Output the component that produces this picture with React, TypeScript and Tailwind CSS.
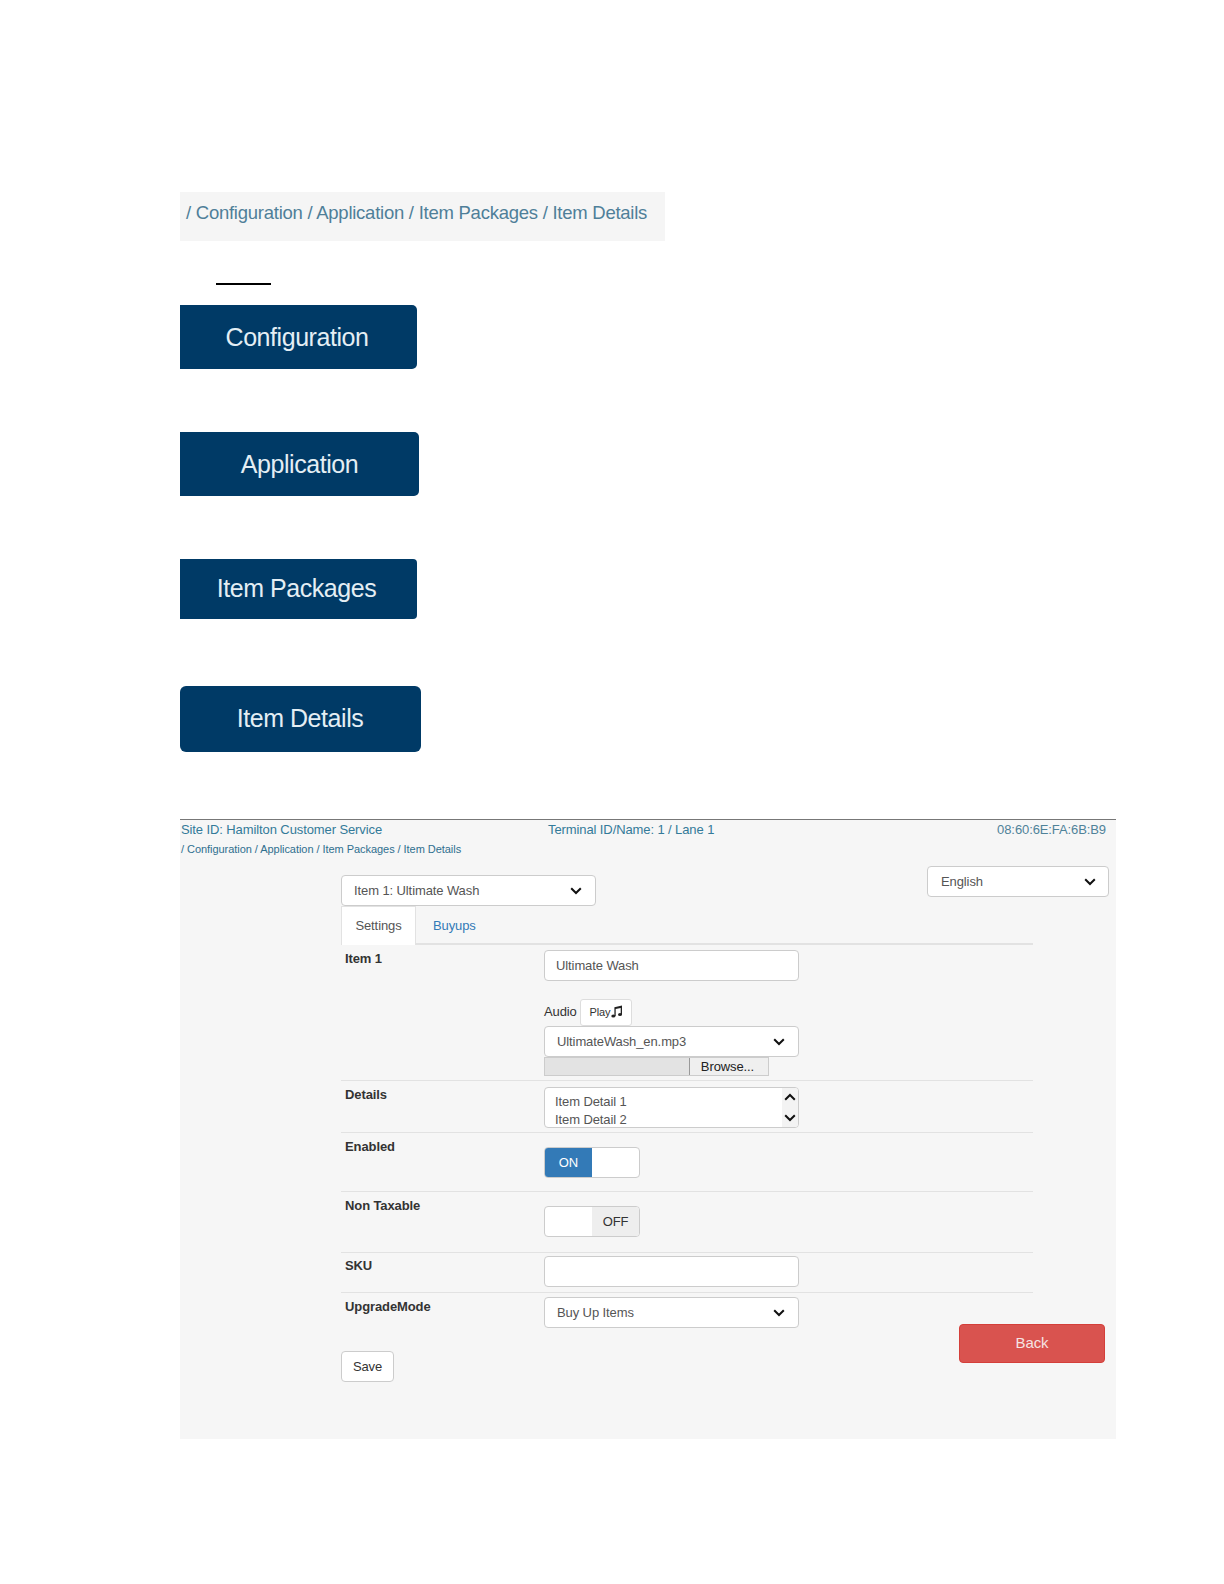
import React from "react";

const Chevron = ({ className = "" }: { className?: string }) => (
  <svg viewBox="0 0 12 8" className={`w-[12px] h-[8px] ${className}`} fill="none" stroke="#111" strokeWidth="2">
    <path d="M1.2 1.2 6 6 10.8 1.2" />
  </svg>
);

const Select = ({ label, className, pad = "pl-[12px] pr-[13px]" }: { label: string; className: string; pad?: string }) => (
  <div className={`flex items-center justify-between bg-white border border-[#ccc] rounded-[4px] text-[13px] text-[#555] ${pad} ${className}`}>
    <span>{label}</span>
    <Chevron />
  </div>
);

const NavButton = ({ label, className }: { label: string; className: string }) => (
  <div className={`flex items-center justify-center bg-[#003a66] text-[#e4eef4] text-[25px] tracking-[-0.45px] ${className}`}>
    {label}
  </div>
);

const Row = ({ label, className, labelClass = "pt-[6px]", children }: { label: string; className: string; labelClass?: string; children: React.ReactNode }) => (
  <div className={`flex border-b border-[#e2e2e2] ${className}`}>
    <div className={`w-[203px] pl-[4px] text-[13px] leading-[16px] font-bold text-[#333] ${labelClass}`}>{label}</div>
    <div className="flex-1">{children}</div>
  </div>
);

const MusicIcon = () => (
  <svg viewBox="0 0 12 13" className="w-[12px] h-[13px] -mt-[3px]" fill="#222">
    <path d="M3.4 2.2 11 .6v9.1h-1.3V3.1L4.7 4.1v7.1H3.4z" />
    <ellipse cx="2.3" cy="11" rx="2" ry="1.5" />
    <ellipse cx="9" cy="9.6" rx="2" ry="1.5" />
  </svg>
);

export default function App() {
  return (
    <div className="w-[1224px] h-[1584px] bg-white pt-[192px] pl-[180px] font-['Liberation_Sans',Arial,sans-serif]">
      <div className="w-[485px] h-[49px] bg-[#f5f5f5] pl-[6px] pt-[8px] text-[18.5px] leading-[26px] tracking-[-0.25px] text-[#4f7f99] whitespace-nowrap">
        / Configuration / Application / Item Packages / Item Details
      </div>
      <div className="ml-[36px] mt-[42px] w-[55px] h-[2px] bg-black" />

      <NavButton label="Configuration" className="mt-[20px] w-[237px] h-[64px] pt-[1px] pr-[3px] rounded-r-[5px]" />
      <NavButton label="Application" className="mt-[63px] w-[239px] h-[64px] pt-[1px] rounded-r-[5px]" />
      <NavButton label="Item Packages" className="mt-[63px] w-[237px] h-[60px] pr-[4px] rounded-r-[4px]" />
      <NavButton label="Item Details" className="mt-[67px] w-[241px] h-[66px] pr-[1px] rounded-[6px]" />

      <div className="mt-[67px] w-[936px] h-[620px] bg-[#f6f6f6] border-t border-[#777] tracking-[-0.1px]">
        <div className="flex justify-between h-[19px] pl-[1px] pr-[10px] pt-[1px] text-[13px] leading-[17px] text-[#337a99]">
          <span className="w-[367px]">Site ID: Hamilton Customer Service</span>
          <span className="flex-1">Terminal ID/Name: 1 / Lane 1</span>
          <span className="text-[#4f8299]">08:60:6E:FA:6B:B9</span>
        </div>
        <div className="h-[27px] pl-[1px] pt-[2px] text-[11px] leading-[16px] tracking-[-0.05px] text-[#2f6f8f]">
          / Configuration / Application / Item Packages / Item Details
        </div>

        <div className="pl-[161px]">
          <div className="flex justify-between items-start w-[768px] h-[40px]">
            <Select label="Item 1: Ultimate Wash" className="mt-[9px] w-[255px] h-[31px]" />
            <Select label="English" className="w-[182px] h-[31px]" pad="pl-[13px] pr-[12px]" />
          </div>

          <div className="w-[692px] h-[39px] flex border-b-2 border-[#e2e2e2] text-[13px]">
            <div className="w-[75px] h-[39px] pb-[1px] flex items-center justify-center bg-white border border-b-0 border-[#e2e2e2] text-[#555]">Settings</div>
            <div className="pl-[17px] pt-[10px] text-[#337ab7]">Buyups</div>
          </div>

          <div className="w-[692px]">
            <Row label="Item 1" className="h-[136px]">
              <div className="w-[255px] pt-[5px]">
                <input readOnly value="Ultimate Wash" className="block w-full h-[31px] px-[11px] bg-white border border-[#ccc] rounded-[4px] text-[13px] text-[#555] tracking-[-0.1px]" />
                <div className="flex items-center mt-[18px] h-[27px] text-[13px] text-[#333]">
                  <span className="w-[36px] pb-[2px]">Audio</span>
                  <div className="flex items-center justify-center w-[52px] h-[27px] bg-white border border-[#ddd] rounded-[3px] text-[11px] text-[#333]">
                    Play<MusicIcon />
                  </div>
                </div>
                <Select label="UltimateWash_en.mp3" className="w-full h-[31px]" />
                <div className="flex w-[225px] h-[19px] bg-[#e3e3e3] border border-[#ccc]">
                  <div className="flex-1" />
                  <div className="flex items-center justify-center w-[79px] pr-[3px] bg-[#efefef] border-l border-[#999] text-[13px] text-[#222]">Browse...</div>
                </div>
              </div>
            </Row>

            <Row label="Details" className="h-[52px]">
              <div className="mt-[6px] flex w-[255px] h-[41px] bg-white border border-[#ccc] rounded-[4px] overflow-hidden">
                <div className="flex-1 pl-[10px] pt-[5px] text-[13px] leading-[18px] text-[#555]">
                  <div>Item Detail 1</div>
                  <div>Item Detail 2</div>
                </div>
                <div className="flex flex-col items-center justify-between w-[16px] py-[5px] bg-[#f3f3f3]">
                  <Chevron className="rotate-180" />
                  <Chevron />
                </div>
              </div>
            </Row>

            <Row label="Enabled" className="h-[59px]">
              <div className="mt-[14px] flex w-[96px] h-[31px] bg-white border border-[#ccc] rounded-[4px] overflow-hidden text-[13px]">
                <div className="flex items-center justify-center w-[47px] bg-[#337ab7] text-white">ON</div>
              </div>
            </Row>

            <Row label="Non Taxable" className="h-[61px]">
              <div className="mt-[14px] flex justify-end w-[96px] h-[31px] bg-white border border-[#ccc] rounded-[4px] overflow-hidden text-[13px]">
                <div className="flex items-center justify-center w-[47px] bg-[#eee] text-[#333]">OFF</div>
              </div>
            </Row>

            <Row label="SKU" className="h-[40px]" labelClass="pt-[5px]">
              <input readOnly value="" className="block mt-[3px] w-[255px] h-[31px] bg-white border border-[#ccc] rounded-[4px]" />
            </Row>

            <div className="flex h-[34px]">
              <div className="w-[203px] pl-[4px] pt-[6px] text-[13px] leading-[16px] font-bold text-[#333]">UpgradeMode</div>
              <Select label="Buy Up Items" className="mt-[4px] w-[255px] h-[31px]" />
            </div>
          </div>

          <div className="flex justify-between items-start -mt-[3px] w-[764px]">
            <div className="mt-[27px] flex items-center justify-center w-[53px] h-[31px] bg-white border border-[#ccc] rounded-[4px] text-[13px] text-[#333]">Save</div>
            <div className="flex items-center justify-center w-[146px] h-[39px] bg-[#d9534f] border border-[#d43f3a] rounded-[4px] text-[15px] text-[#f5e4e3]">Back</div>
          </div>
        </div>
      </div>
    </div>
  );
}
